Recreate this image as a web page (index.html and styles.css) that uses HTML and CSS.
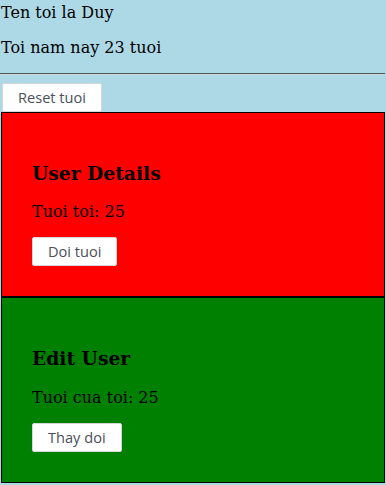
FILE: index.html
```html
<!DOCTYPE html>
<html>
<head>
<meta charset="utf-8">
<link rel="stylesheet" href="styles.css">
</head>
<body>
<div class="app">
  <p class="first">Ten toi la Duy</p>
  <p>Toi nam nay 23 tuoi</p>
  <hr class="rule">
  <button class="btn btn-reset">Reset tuoi</button>
  <div class="panel panel-red">
    <h3 class="panel-title">User Details</h3>
    <p>Tuoi toi: 25</p>
    <button class="btn">Doi tuoi</button>
  </div>
  <div class="panel panel-green">
    <h3 class="panel-title">Edit User</h3>
    <p>Tuoi cua toi: 25</p>
    <button class="btn">Thay doi</button>
  </div>
</div>
</body>
</html>
```
FILE: styles.css
```css
html, body {
  margin: 0;
  padding: 0;
  background: #add8e6;
}
body {
  font-family: "DejaVu Serif", serif;
  font-size: 16px;
  color: #000;
}
.app {
  padding: 3px 1px 0;
}
p {
  margin: 16px 0;
}
.first {
  margin-top: 0;
}
.rule {
  margin: 16px 0 8px -1px;
  border: 0;
  border-top: 1px solid #555;
  border-bottom: 1px solid #c8d8dc;
  height: 0;
}
.btn {
  display: block;
  font-family: "Open Sans", sans-serif;
  font-size: 14.6px;
  color: #4a4f5a;
  background: #fff;
  border: 1px solid #d6d6d6;
  border-radius: 2px;
  padding: 4px 15px;
  line-height: 19px;
}
.btn-reset {
  margin: 0 0 0 1px;
}
.panel {
  border: 1px solid #000;
  padding: 30px;
}
.panel-red {
  background: #ff0000;
}
.panel-green {
  background: #008000;
}
.panel-title {
  font-size: 1.17em;
  font-weight: bold;
  margin: 18.72px 0;
}
```
